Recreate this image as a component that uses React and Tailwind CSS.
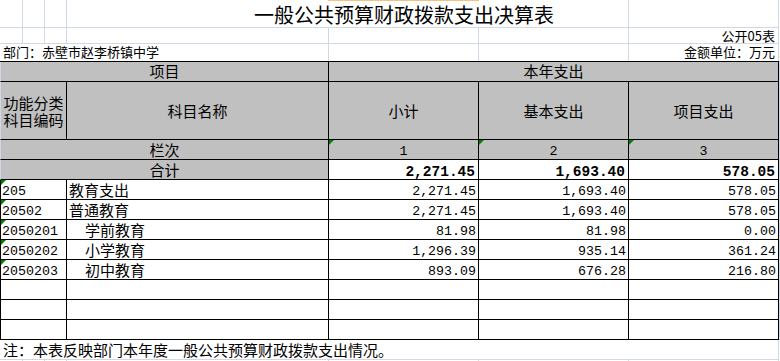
import React from "react";

const rows = [
  { code: "205", name: "教育支出", indent: false, a: "2,271.45", b: "1,693.40", c: "578.05" },
  { code: "20502", name: "普通教育", indent: false, a: "2,271.45", b: "1,693.40", c: "578.05" },
  { code: "2050201", name: "学前教育", indent: true, a: "81.98", b: "81.98", c: "0.00" },
  { code: "2050202", name: "小学教育", indent: true, a: "1,296.39", b: "935.14", c: "361.24" },
  { code: "2050203", name: "初中教育", indent: true, a: "893.09", b: "676.28", c: "216.80" },
];

const grid = "shrink-0 border-r border-b border-[#d0d7e5]";
const gridR = "shrink-0 border-r border-[#d0d7e5]";
const num = "font-['Liberation_Mono','Noto_Sans_CJK_SC',monospace] text-[13.3px] leading-[14px] pt-[5px]";
const black = "shrink-0 border-r border-b border-black";

function Tri() {
  return (
    <span className="absolute left-0 top-0 h-0 w-0 border-t-[5px] border-r-[5px] border-t-[#008000] border-r-transparent" />
  );
}

function Edge() {
  return <div className="w-px shrink-0 bg-[#d0d7e5]" />;
}

export default function App() {
  return (
    <div className="relative h-[361px] w-[780px] overflow-hidden bg-white text-black font-['Noto_Sans_CJK_SC',sans-serif]">
      <div className="absolute left-[328px] top-0 h-px w-[151px] bg-[#f5c27a]" />

      {/* title row */}
      <div className="flex h-[28px]">
        <div className={`w-[23px] ${grid}`} />
        <div className={`w-[22px] ${grid}`} />
        <div className={`w-[22px] ${grid}`} />
        <div className={`w-[562px] ${grid} whitespace-nowrap pl-[187px] pt-[5px] text-[20px] leading-[20px]`}>
          一般公共预算财政拨款支出决算表
        </div>
        <div className={`w-[150px] ${grid}`} />
        <div className="w-px shrink-0" />
      </div>

      {/* row 2 */}
      <div className="flex h-[16px] text-[13px] leading-[15px]">
        <div className={`w-[23px] ${grid}`} />
        <div className={`w-[22px] ${grid}`} />
        <div className={`w-[22px] ${grid}`} />
        <div className={`w-[262px] ${grid}`} />
        <div className={`w-[150px] ${grid}`} />
        <div className={`w-[150px] ${grid}`} />
        <div className={`w-[150px] ${grid} whitespace-nowrap pr-[3px] text-right`}>公开05表</div>
        <div className="w-px shrink-0" />
      </div>

      {/* row 3 */}
      <div className="flex h-[17px] text-[13px] leading-[16px]">
        <div className={`w-[329px] ${gridR} whitespace-nowrap pl-[3px]`}>部门：赤壁市赵李桥镇中学</div>
        <div className={`w-[150px] ${gridR}`} />
        <div className={`w-[150px] ${gridR}`} />
        <div className={`w-[150px] ${gridR} whitespace-nowrap pr-[3px] text-right`}>金额单位：万元</div>
        <div className="w-px shrink-0" />
      </div>

      {/* table top border */}
      <div className="flex h-px">
        <div className="w-[779px] shrink-0 bg-black" />
        <Edge />
      </div>

      {/* header row 1 */}
      <div className="flex h-[20px] text-[15px] leading-[18px]">
        <div className="w-[329px] shrink-0 border-l border-r border-b border-l-[#d0d7e5] border-r-black border-b-black bg-[#c0c0c0] text-center">
          项目
        </div>
        <div className={`w-[450px] ${black} bg-[#c0c0c0] text-center`}>本年支出</div>
        <Edge />
      </div>

      {/* header row 2 */}
      <div className="flex h-[58px] text-[15px] leading-[18px]">
        <div className="flex w-[67px] shrink-0 items-center justify-center border-l border-r border-b border-l-[#d0d7e5] border-r-black border-b-black bg-[#c0c0c0] text-center leading-[17px]">
          功能分类
          <br />
          科目编码
        </div>
        <div className={`flex w-[262px] items-center justify-center ${black} bg-[#c0c0c0]`}>科目名称</div>
        <div className={`flex w-[150px] items-center justify-center ${black} bg-[#c0c0c0]`}>小计</div>
        <div className={`flex w-[150px] items-center justify-center ${black} bg-[#c0c0c0]`}>基本支出</div>
        <div className={`flex w-[150px] items-center justify-center ${black} bg-[#c0c0c0]`}>项目支出</div>
        <Edge />
      </div>

      {/* 栏次 */}
      <div className="flex h-[20px] text-[15px] leading-[19px]">
        <div className="w-[329px] shrink-0 border-l border-r border-b border-l-[#d0d7e5] border-r-black border-b-black bg-[#c0c0c0] text-center">
          栏次
        </div>
        <div className={`relative w-[150px] ${black} bg-[#c0c0c0] text-center ${num}`}>
          <Tri />1
        </div>
        <div className={`relative w-[150px] ${black} bg-[#c0c0c0] text-center ${num}`}>
          <Tri />2
        </div>
        <div className={`relative w-[150px] ${black} bg-[#c0c0c0] text-center ${num}`}>
          <Tri />3
        </div>
        <Edge />
      </div>

      {/* 合计 */}
      <div className="flex h-[20px] text-[15px] leading-[19px]">
        <div className="w-[329px] shrink-0 border-l border-r border-b border-l-[#d0d7e5] border-r-black border-b-black bg-[#c0c0c0] text-center">
          合计
        </div>
        {["2,271.45", "1,693.40", "578.05"].map((v) => (
          <div
            key={v}
            className={`w-[150px] ${black} pr-[3px] pt-[5px] text-right font-['Liberation_Mono',monospace] text-[14.5px] font-bold leading-[14px]`}
          >
            {v}
          </div>
        ))}
        <Edge />
      </div>

      {/* data rows */}
      {rows.map((r) => (
        <div key={r.code} className="flex h-[20px] text-[15px] leading-[19px]">
          <div className={`relative w-[67px] border-l ${black} pl-[1px] ${num}`}>
            <Tri />
            {r.code}
          </div>
          <div className={`w-[262px] ${black} whitespace-nowrap ${r.indent ? "pl-[18px]" : "pl-[2px]"}`}>{r.name}</div>
          <div className={`w-[150px] ${black} pr-[2px] text-right ${num}`}>{r.a}</div>
          <div className={`w-[150px] ${black} pr-[2px] text-right ${num}`}>{r.b}</div>
          <div className={`w-[150px] ${black} pr-[2px] text-right ${num}`}>{r.c}</div>
          <Edge />
        </div>
      ))}

      {[0, 1, 2].map((i) => (
        <div key={i} className="flex h-[20px]">
          <div className={`w-[67px] border-l ${black}`} />
          <div className={`w-[262px] ${black}`} />
          <div className={`w-[150px] ${black}`} />
          <div className={`w-[150px] ${black}`} />
          <div className={`w-[150px] ${black}`} />
          <Edge />
        </div>
      ))}

      {/* note */}
      <div className="flex h-[20px] text-[15px] leading-[19px]">
        <div className={`w-[779px] ${grid} whitespace-nowrap pl-[3px]`}>
          注：本表反映部门本年度一般公共预算财政拨款支出情况。
        </div>
        <div className="w-px shrink-0" />
      </div>

      {/* sliver */}
      <div className="flex h-px">
        <div className={`w-[23px] ${gridR}`} />
        <div className={`w-[22px] ${gridR}`} />
        <div className={`w-[22px] ${gridR}`} />
        <div className={`w-[262px] ${gridR}`} />
        <div className={`w-[150px] ${gridR}`} />
        <div className={`w-[150px] ${gridR}`} />
        <div className={`w-[150px] ${gridR}`} />
        <div className="w-px shrink-0" />
      </div>
    </div>
  );
}
